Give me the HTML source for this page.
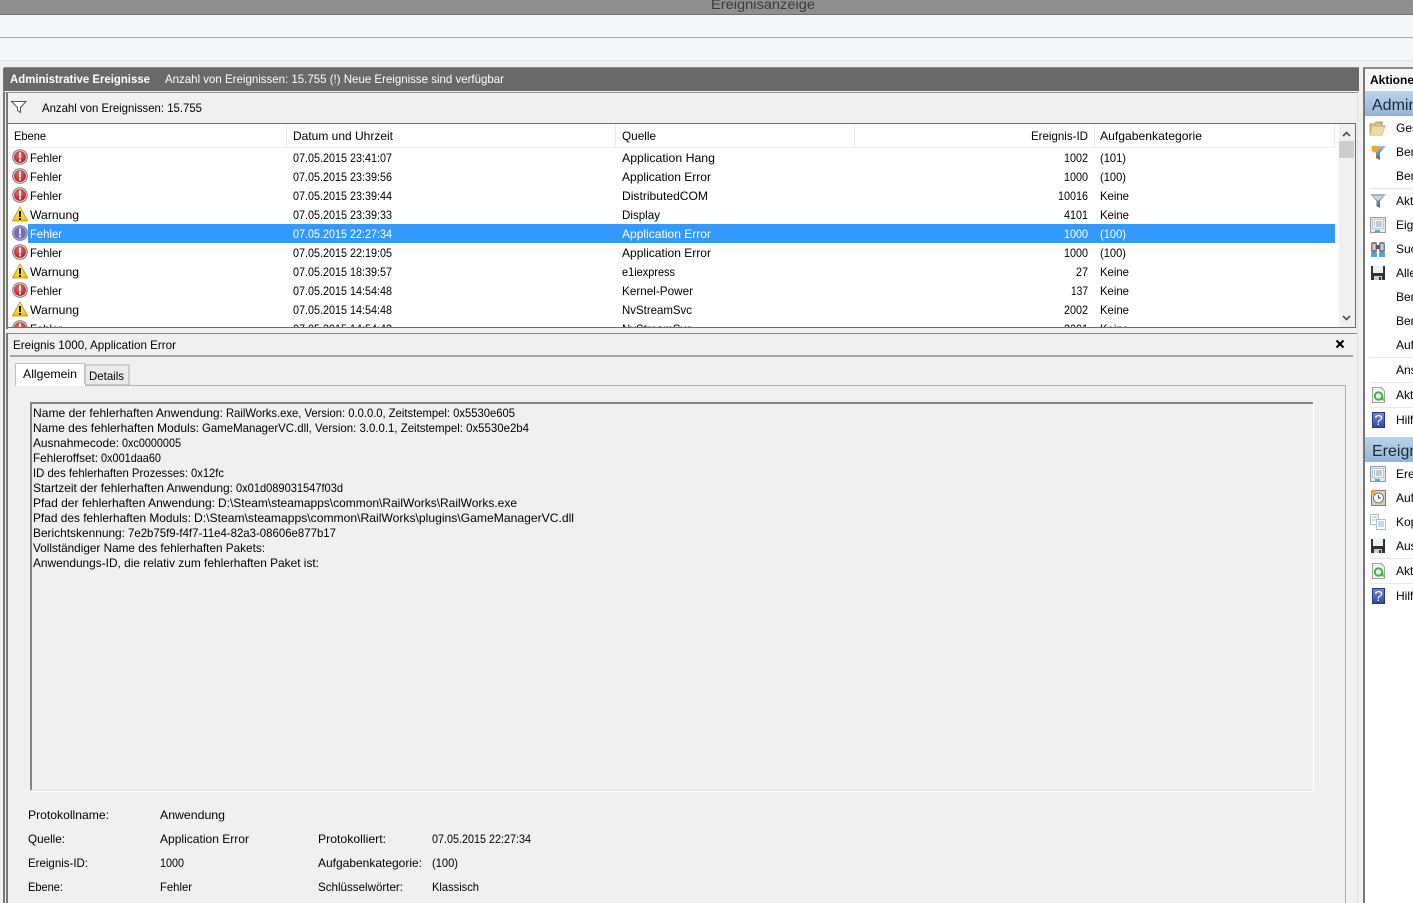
<!DOCTYPE html>
<html lang="de"><head><meta charset="utf-8"><title>Ereignisanzeige</title>
<style>
html,body{margin:0;padding:0;width:1413px;height:903px;overflow:hidden;background:#f0f0f0}
svg{display:block}
text{font-family:"Liberation Sans",sans-serif;font-size:12px;fill:#000;white-space:pre}
.w{fill:#fff}
.h{font-size:16px;fill:#1a2a3a}
</style></head><body>
<svg xmlns="http://www.w3.org/2000/svg" width="1413" height="903" viewBox="0 0 1413 903" shape-rendering="crispEdges">
<defs>
<linearGradient id="bl" x1="0" y1="0" x2="0" y2="1"><stop offset="0" stop-color="#bcd4ea"/><stop offset="1" stop-color="#94b4d6"/></linearGradient>
<radialGradient id="rd" cx=".45" cy=".35" r=".7"><stop offset="0" stop-color="#f06a6a"/><stop offset="1" stop-color="#b81414"/></radialGradient>
<linearGradient id="yl" x1="0" y1="0" x2="0" y2="1"><stop offset="0" stop-color="#fff18a"/><stop offset="1" stop-color="#f4c400"/></linearGradient>
<linearGradient id="fn" x1="0" y1="0" x2="0" y2="1"><stop offset="0" stop-color="#a9bac9"/><stop offset="1" stop-color="#4e6274"/></linearGradient>
<linearGradient id="hp" x1="0" y1="0" x2="0" y2="1"><stop offset="0" stop-color="#6f8ad8"/><stop offset="1" stop-color="#2f4aa8"/></linearGradient>
<symbol id="err" viewBox="0 0 16 16" width="16" height="16"><g shape-rendering="geometricPrecision"><circle cx="8" cy="8" r="7.900" fill="#8c8c8c"/><circle cx="8" cy="8" r="6.700" fill="#d8d8d8"/><circle cx="8" cy="8" r="5.900" fill="url(#rd)"/><rect x="7" y="3.400" width="2" height="6" fill="#fff"/><rect x="7" y="10.400" width="2" height="2" fill="#fff"/></g></symbol>
<symbol id="sel" viewBox="0 0 16 16" width="16" height="16"><g shape-rendering="geometricPrecision"><circle cx="8" cy="8" r="7.900" fill="#7f86b0"/><circle cx="8" cy="8" r="6.700" fill="#a8b4d8"/><circle cx="8" cy="8" r="5.900" fill="#7a68b0"/><rect x="7" y="3.400" width="2" height="6" fill="#dfe6f5"/><rect x="7" y="10.400" width="2" height="2" fill="#dfe6f5"/></g></symbol>
<symbol id="warn" viewBox="0 0 16 16" width="16" height="16"><g shape-rendering="geometricPrecision"><path d="M8 .8 15.600 15H.4Z" fill="url(#yl)" stroke="#b89400" stroke-width=".8"/><rect x="7" y="5" width="2" height="6" fill="#111"/><rect x="7" y="12" width="2" height="2" fill="#111"/></g></symbol>
<symbol id="fun" viewBox="0 0 16 16" width="16" height="16"><g shape-rendering="geometricPrecision"><path d="M0 1H16L10 8V15L6.500 13V8Z" fill="url(#fn)"/><path d="M3 3H13L9 7H7Z" fill="#c8d6e2"/></g></symbol>
<symbol id="doc" viewBox="0 0 16 16" width="16" height="16"><rect x=".5" y=".5" width="15" height="15" fill="#e6e8ec" stroke="#9a9a9a"/><rect x="2.500" y="2.500" width="11" height="9" fill="#f6f8fb" stroke="#c0c6ce"/><path d="M4 5H5M4 7H5M4 9H5" stroke="#39a0e0"/><path d="M6 5H12M6 7H12M6 9H12" stroke="#8c9aaa"/><rect x="5" y="13" width="5" height="2" fill="#33b4ee"/></symbol>
<symbol id="save" viewBox="0 0 16 16" width="16" height="16"><path d="M1 1H15V15H1Z" fill="#2f3338"/><rect x="3" y="1" width="10" height="7" fill="#eef0f2"/><rect x="4" y="11" width="8" height="4" fill="#c9ccd0"/><rect x="9" y="12" width="2" height="3" fill="#333"/></symbol>
<symbol id="ref" viewBox="0 0 16 16" width="16" height="16"><path d="M2.500 .5H11L14.500 4V15.500H2.500Z" fill="#f4f4f4" stroke="#a0a0a0"/><g shape-rendering="geometricPrecision"><circle cx="8.500" cy="9" r="3.700" fill="none" stroke="#3cb83c" stroke-width="2"/><path d="M9 11.500 13.500 9.500 13.500 14Z" fill="#3cb83c"/></g></symbol>
<symbol id="help" viewBox="0 0 16 16" width="16" height="16"><rect x="1.500" y=".5" width="12" height="15" fill="url(#hp)" stroke="#22387e"/><text x="7.500" y="13" text-anchor="middle" style="font-size:15px;fill:#fff">?</text></symbol>
<clipPath id="lc"><rect x="8" y="148" width="1330" height="179"/></clipPath>
</defs>

<!-- window chrome -->
<rect width="1413" height="903" fill="#f0f0f0"/>
<rect width="1413" height="14" fill="#8f8f8f"/>
<rect y="14" width="1413" height="1" fill="#6f6f6f"/>
<text x="711" y="9" textLength="104" lengthAdjust="spacingAndGlyphs" style="font-size:14px;fill:#3c3c3c">Ereignisanzeige</text>
<rect y="15" width="1413" height="45" fill="#f5f6f7"/>
<rect y="37" width="1413" height="1" fill="#a8a8a8"/>
<rect y="60" width="1413" height="1" fill="#e6e6e6"/>

<!-- left outer frame -->
<rect x="3" y="68" width="2" height="835" fill="#777"/>
<rect x="15" y="385" width="1" height="518" fill="#a8a8a8"/>
<rect x="4" y="68" width="1355" height="23" fill="#696969"/>
<rect x="4" y="67" width="1355" height="1" fill="#8a8a8a"/>
<rect x="4" y="91" width="1355" height="1" fill="#f4f4f4"/>
<rect x="5" y="92" width="1353" height="1" fill="#8f8f8f"/>
<text class="w" x="10" y="83" textLength="140" lengthAdjust="spacingAndGlyphs" style="font-weight:bold">Administrative Ereignisse</text>
<text class="w" x="165" y="83" textLength="339" lengthAdjust="spacingAndGlyphs">Anzahl von Ereignissen: 15.755 (!) Neue Ereignisse sind verfügbar</text>

<!-- filter strip -->
<rect x="5" y="93" width="1352" height="31" fill="#f0f0f0"/>
<g shape-rendering="geometricPrecision"><path d="M11.500 101.500H26L20.500 107.500V112.500L17.500 110.500V107.500Z" fill="#fff" stroke="#555"/></g>
<text x="42" y="112" textLength="160" lengthAdjust="spacingAndGlyphs">Anzahl von Ereignissen: 15.755</text>

<!-- list -->
<rect x="7" y="123" width="1349" height="205" fill="#fff"/>
<rect x="7" y="123" width="1349" height="1" fill="#6c6c6c"/>
<rect x="6" y="93" width="2" height="240" fill="#7a7a7a"/>
<rect x="1355" y="123" width="1" height="205" fill="#6c6c6c"/>
<rect x="7" y="327" width="1349" height="1" fill="#6c6c6c"/>
<rect x="8" y="147" width="1327" height="1" fill="#eaf0f9"/>
<rect x="286" y="124" width="1" height="23" fill="#e4ebf6"/>
<rect x="615" y="124" width="1" height="23" fill="#e4ebf6"/>
<rect x="854" y="124" width="1" height="23" fill="#e4ebf6"/>
<rect x="1094" y="124" width="1" height="23" fill="#e4ebf6"/>
<rect x="1334" y="124" width="1" height="23" fill="#e4ebf6"/>
<rect x="1335" y="124" width="4" height="23" fill="#fbfcfe"/>
<text x="14" y="140" textLength="32" lengthAdjust="spacingAndGlyphs">Ebene</text>
<text x="293" y="140" textLength="100" lengthAdjust="spacingAndGlyphs">Datum und Uhrzeit</text>
<text x="622" y="140" textLength="34" lengthAdjust="spacingAndGlyphs">Quelle</text>
<text x="1031" y="140" textLength="57" lengthAdjust="spacingAndGlyphs">Ereignis-ID</text>
<text x="1100" y="140" textLength="102" lengthAdjust="spacingAndGlyphs">Aufgabenkategorie</text>
<!-- scrollbar -->
<rect x="1339" y="124" width="16" height="203" fill="#f0f0f0"/>
<rect x="1339" y="141" width="15" height="17" fill="#cdcdcd"/>
<g shape-rendering="geometricPrecision" fill="none" stroke="#505050" stroke-width="1.600"><path d="M1343 136 1346.500 132.500 1350 136"/><path d="M1343 316 1346.500 319.500 1350 316"/></g>
<!-- selection -->
<rect x="28" y="224" width="1307" height="19" fill="#3399ff"/>

<g clip-path="url(#lc)">
<use href="#err" x="12" y="149"/><text x="30" y="162" textLength="32" lengthAdjust="spacingAndGlyphs">Fehler</text><text x="293" y="162" textLength="99" lengthAdjust="spacingAndGlyphs">07.05.2015 23:41:07</text><text x="622" y="162" textLength="93" lengthAdjust="spacingAndGlyphs">Application Hang</text><text x="1064" y="162" textLength="24" lengthAdjust="spacingAndGlyphs">1002</text><text x="1100" y="162" textLength="26" lengthAdjust="spacingAndGlyphs">(101)</text>
<use href="#err" x="12" y="168"/><text x="30" y="181" textLength="32" lengthAdjust="spacingAndGlyphs">Fehler</text><text x="293" y="181" textLength="99" lengthAdjust="spacingAndGlyphs">07.05.2015 23:39:56</text><text x="622" y="181" textLength="89" lengthAdjust="spacingAndGlyphs">Application Error</text><text x="1064" y="181" textLength="24" lengthAdjust="spacingAndGlyphs">1000</text><text x="1100" y="181" textLength="26" lengthAdjust="spacingAndGlyphs">(100)</text>
<use href="#err" x="12" y="187"/><text x="30" y="200" textLength="32" lengthAdjust="spacingAndGlyphs">Fehler</text><text x="293" y="200" textLength="99" lengthAdjust="spacingAndGlyphs">07.05.2015 23:39:44</text><text x="622" y="200" textLength="86" lengthAdjust="spacingAndGlyphs">DistributedCOM</text><text x="1058" y="200" textLength="30" lengthAdjust="spacingAndGlyphs">10016</text><text x="1100" y="200" textLength="29" lengthAdjust="spacingAndGlyphs">Keine</text>
<use href="#warn" x="12" y="206"/><text x="30" y="219" textLength="49" lengthAdjust="spacingAndGlyphs">Warnung</text><text x="293" y="219" textLength="99" lengthAdjust="spacingAndGlyphs">07.05.2015 23:39:33</text><text x="622" y="219" textLength="38" lengthAdjust="spacingAndGlyphs">Display</text><text x="1064" y="219" textLength="24" lengthAdjust="spacingAndGlyphs">4101</text><text x="1100" y="219" textLength="29" lengthAdjust="spacingAndGlyphs">Keine</text>
<use href="#sel" x="12" y="225"/><text class="w" x="30" y="238" textLength="32" lengthAdjust="spacingAndGlyphs">Fehler</text><text class="w" x="293" y="238" textLength="99" lengthAdjust="spacingAndGlyphs">07.05.2015 22:27:34</text><text class="w" x="622" y="238" textLength="89" lengthAdjust="spacingAndGlyphs">Application Error</text><text class="w" x="1064" y="238" textLength="24" lengthAdjust="spacingAndGlyphs">1000</text><text class="w" x="1100" y="238" textLength="26" lengthAdjust="spacingAndGlyphs">(100)</text>
<use href="#err" x="12" y="244"/><text x="30" y="257" textLength="32" lengthAdjust="spacingAndGlyphs">Fehler</text><text x="293" y="257" textLength="99" lengthAdjust="spacingAndGlyphs">07.05.2015 22:19:05</text><text x="622" y="257" textLength="89" lengthAdjust="spacingAndGlyphs">Application Error</text><text x="1064" y="257" textLength="24" lengthAdjust="spacingAndGlyphs">1000</text><text x="1100" y="257" textLength="26" lengthAdjust="spacingAndGlyphs">(100)</text>
<use href="#warn" x="12" y="263"/><text x="30" y="276" textLength="49" lengthAdjust="spacingAndGlyphs">Warnung</text><text x="293" y="276" textLength="99" lengthAdjust="spacingAndGlyphs">07.05.2015 18:39:57</text><text x="622" y="276" textLength="53" lengthAdjust="spacingAndGlyphs">e1iexpress</text><text x="1076" y="276" textLength="12" lengthAdjust="spacingAndGlyphs">27</text><text x="1100" y="276" textLength="29" lengthAdjust="spacingAndGlyphs">Keine</text>
<use href="#err" x="12" y="282"/><text x="30" y="295" textLength="32" lengthAdjust="spacingAndGlyphs">Fehler</text><text x="293" y="295" textLength="99" lengthAdjust="spacingAndGlyphs">07.05.2015 14:54:48</text><text x="622" y="295" textLength="71" lengthAdjust="spacingAndGlyphs">Kernel-Power</text><text x="1071" y="295" textLength="17" lengthAdjust="spacingAndGlyphs">137</text><text x="1100" y="295" textLength="29" lengthAdjust="spacingAndGlyphs">Keine</text>
<use href="#warn" x="12" y="301"/><text x="30" y="314" textLength="49" lengthAdjust="spacingAndGlyphs">Warnung</text><text x="293" y="314" textLength="99" lengthAdjust="spacingAndGlyphs">07.05.2015 14:54:48</text><text x="622" y="314" textLength="70" lengthAdjust="spacingAndGlyphs">NvStreamSvc</text><text x="1064" y="314" textLength="24" lengthAdjust="spacingAndGlyphs">2002</text><text x="1100" y="314" textLength="29" lengthAdjust="spacingAndGlyphs">Keine</text>
<use href="#err" x="12" y="320"/><text x="30" y="333" textLength="32" lengthAdjust="spacingAndGlyphs">Fehler</text><text x="293" y="333" textLength="99" lengthAdjust="spacingAndGlyphs">07.05.2015 14:54:43</text><text x="622" y="333" textLength="70" lengthAdjust="spacingAndGlyphs">NvStreamSvc</text><text x="1064" y="333" textLength="24" lengthAdjust="spacingAndGlyphs">2001</text><text x="1100" y="333" textLength="29" lengthAdjust="spacingAndGlyphs">Keine</text>
</g>

<!-- detail pane -->
<rect x="6" y="329" width="1351" height="574" fill="#f0f0f0"/>
<rect x="6" y="333" width="1351" height="1" fill="#8a8a8a"/>
<rect x="6" y="333" width="2" height="570" fill="#7a7a7a"/>
<rect x="1357" y="93" width="1" height="810" fill="#e2e2e2"/>
<text x="13" y="349" textLength="163" lengthAdjust="spacingAndGlyphs">Ereignis 1000, Application Error</text>
<g shape-rendering="geometricPrecision" stroke="#000" stroke-width="2"><path d="M1336.500 340.500 1343.500 347.500M1343.500 340.500 1336.500 347.500"/></g>
<rect x="10" y="355" width="1343" height="2" fill="#a6a6a6"/>

<!-- tabs -->
<rect x="15" y="385" width="1331" height="1" fill="#b4b4b4"/>
<rect x="85" y="365" width="44" height="20" fill="#eaeaea" stroke="#b0b0b0"/>
<rect x="15.500" y="363.500" width="69" height="22" fill="#fff" stroke="#c0c0c0"/>
<rect x="16" y="384" width="69" height="2" fill="#fff"/>
<text x="23" y="378" textLength="54" lengthAdjust="spacingAndGlyphs">Allgemein</text>
<text x="89" y="380" textLength="35" lengthAdjust="spacingAndGlyphs">Details</text>
<rect x="19" y="386" width="1327" height="517" fill="#f0f0f0"/>
<rect x="1345" y="385" width="1" height="518" fill="#b0b0b0"/>

<!-- message box -->
<rect x="30" y="402" width="1284" height="390" fill="#f0f0f0"/>
<rect x="30" y="402" width="1283" height="2" fill="#858585"/>
<rect x="30" y="402" width="2" height="389" fill="#858585"/>
<rect x="30" y="790" width="1284" height="1" fill="#e3e3e3"/>
<rect x="30" y="791" width="1284" height="1" fill="#fff"/>
<rect x="1313" y="402" width="1" height="390" fill="#fff"/>
<text x="33" y="417" textLength="190" lengthAdjust="spacingAndGlyphs">Name der fehlerhaften Anwendung:</text><text x="226" y="417" textLength="289" lengthAdjust="spacingAndGlyphs">RailWorks.exe, Version: 0.0.0.0, Zeitstempel: 0x5530e605</text>
<text x="33" y="432" textLength="166" lengthAdjust="spacingAndGlyphs">Name des fehlerhaften Moduls:</text><text x="202" y="432" textLength="327" lengthAdjust="spacingAndGlyphs">GameManagerVC.dll, Version: 3.0.0.1, Zeitstempel: 0x5530e2b4</text>
<text x="33" y="447" textLength="86" lengthAdjust="spacingAndGlyphs">Ausnahmecode:</text><text x="122" y="447" textLength="59" lengthAdjust="spacingAndGlyphs">0xc0000005</text>
<text x="33" y="462" textLength="65" lengthAdjust="spacingAndGlyphs">Fehleroffset:</text><text x="101" y="462" textLength="60" lengthAdjust="spacingAndGlyphs">0x001daa60</text>
<text x="33" y="477" textLength="155" lengthAdjust="spacingAndGlyphs">ID des fehlerhaften Prozesses:</text><text x="191" y="477" textLength="33" lengthAdjust="spacingAndGlyphs">0x12fc</text>
<text x="33" y="492" textLength="200" lengthAdjust="spacingAndGlyphs">Startzeit der fehlerhaften Anwendung:</text><text x="236" y="492" textLength="107" lengthAdjust="spacingAndGlyphs">0x01d089031547f03d</text>
<text x="33" y="507" textLength="182" lengthAdjust="spacingAndGlyphs">Pfad der fehlerhaften Anwendung:</text><text x="218" y="507" textLength="299" lengthAdjust="spacingAndGlyphs">D:\Steam\steamapps\common\RailWorks\RailWorks.exe</text>
<text x="33" y="522" textLength="158" lengthAdjust="spacingAndGlyphs">Pfad des fehlerhaften Moduls:</text><text x="194" y="522" textLength="380" lengthAdjust="spacingAndGlyphs">D:\Steam\steamapps\common\RailWorks\plugins\GameManagerVC.dll</text>
<text x="33" y="537" textLength="92" lengthAdjust="spacingAndGlyphs">Berichtskennung:</text><text x="128" y="537" textLength="208" lengthAdjust="spacingAndGlyphs">7e2b75f9-f4f7-11e4-82a3-08606e877b17</text>
<text x="33" y="552" textLength="232" lengthAdjust="spacingAndGlyphs">Vollständiger Name des fehlerhaften Pakets:</text>
<text x="33" y="567" textLength="286" lengthAdjust="spacingAndGlyphs">Anwendungs-ID, die relativ zum fehlerhaften Paket ist:</text>

<!-- fields -->
<text x="28" y="819" textLength="81" lengthAdjust="spacingAndGlyphs">Protokollname:</text>
<text x="160" y="819" textLength="65" lengthAdjust="spacingAndGlyphs">Anwendung</text>
<text x="28" y="843" textLength="37" lengthAdjust="spacingAndGlyphs">Quelle:</text>
<text x="160" y="843" textLength="89" lengthAdjust="spacingAndGlyphs">Application Error</text>
<text x="318" y="843" textLength="68" lengthAdjust="spacingAndGlyphs">Protokolliert:</text>
<text x="432" y="843" textLength="99" lengthAdjust="spacingAndGlyphs">07.05.2015 22:27:34</text>
<text x="28" y="867" textLength="60" lengthAdjust="spacingAndGlyphs">Ereignis-ID:</text>
<text x="160" y="867" textLength="24" lengthAdjust="spacingAndGlyphs">1000</text>
<text x="318" y="867" textLength="104" lengthAdjust="spacingAndGlyphs">Aufgabenkategorie:</text>
<text x="432" y="867" textLength="26" lengthAdjust="spacingAndGlyphs">(100)</text>
<text x="28" y="891" textLength="35" lengthAdjust="spacingAndGlyphs">Ebene:</text>
<text x="160" y="891" textLength="32" lengthAdjust="spacingAndGlyphs">Fehler</text>
<text x="318" y="891" textLength="85" lengthAdjust="spacingAndGlyphs">Schlüsselwörter:</text>
<text x="432" y="891" textLength="47" lengthAdjust="spacingAndGlyphs">Klassisch</text>

<!-- actions pane -->
<rect x="1365" y="68" width="48" height="835" fill="#fff"/>
<rect x="1363" y="68" width="2" height="835" fill="#777"/>
<rect x="1363" y="67" width="50" height="2" fill="#8a8a8a"/>
<rect x="1365" y="69" width="48" height="21" fill="#f7f7f7"/>
<text x="1370" y="84" style="font-weight:bold">Aktionen</text>
<rect x="1365" y="91" width="48" height="25" fill="url(#bl)"/>
<text class="h" x="1372" y="110">Administrative Ereignisse</text>
<rect x="1370" y="188" width="43" height="1" fill="#e4e4e4"/>
<rect x="1370" y="357" width="43" height="1" fill="#e8e8e8"/>
<rect x="1370" y="382" width="43" height="1" fill="#e8e8e8"/>
<rect x="1370" y="407" width="43" height="1" fill="#e8e8e8"/>
<rect x="1365" y="437" width="48" height="25" fill="url(#bl)"/>
<text class="h" x="1372" y="456">Ereignis 1000, Application Error</text>
<rect x="1370" y="558" width="43" height="1" fill="#e8e8e8"/>
<rect x="1370" y="583" width="43" height="1" fill="#e8e8e8"/>

<g shape-rendering="geometricPrecision"><path d="M1370 124H1375L1376 122H1382V126H1385L1382 135H1370Z" fill="#d8c08a" stroke="#a88a50" stroke-width=".8"/><path d="M1370 135 1373 127H1385L1382 135Z" fill="#eed9a6"/><rect x="1380" y="122" width="3" height="1" fill="#5bd45b"/></g>
<g shape-rendering="geometricPrecision"><path d="M1371 146H1386L1380 153V160L1376 158V153Z" fill="url(#fn)"/><circle cx="1375" cy="149" r="3.500" fill="#f5a623"/></g>
<use href="#fun" x="1370" y="193"/>
<use href="#doc" x="1370" y="217"/>
<g shape-rendering="geometricPrecision"><rect x="1371" y="242" width="6" height="11" rx="2" fill="#7a838e"/><rect x="1379" y="242" width="6" height="11" rx="2" fill="#7a838e"/><rect x="1372.500" y="244" width="3" height="6" fill="#c8ced6"/><rect x="1380.500" y="244" width="3" height="6" fill="#c8ced6"/><rect x="1376" y="245" width="4" height="4" fill="#505860"/><rect x="1371" y="253" width="6" height="4" fill="#4aa8e8"/><rect x="1379" y="253" width="6" height="4" fill="#4aa8e8"/></g>
<use href="#save" x="1370" y="265"/>
<use href="#ref" x="1370" y="387"/>
<use href="#help" x="1371" y="412"/>
<use href="#doc" x="1370" y="466"/>
<rect x="1371.500" y="490.500" width="14" height="15" fill="#d8d0c4" stroke="#8a7a68"/><g shape-rendering="geometricPrecision"><circle cx="1378.500" cy="498" r="5" fill="#fff" stroke="#777"/><path d="M1378.500 495V498H1381" fill="none" stroke="#444"/><circle cx="1373" cy="492" r="2.500" fill="#f5a623"/></g>
<rect x="1370.500" y="514.500" width="8" height="10" fill="#fff" stroke="#b4bcc6"/><rect x="1376.500" y="519.500" width="9" height="10" fill="#fff" stroke="#b4bcc6"/><path d="M1372 517H1377M1372 520H1375M1378 522H1384M1378 524H1384M1378 526H1384" stroke="#8ab4dc"/>
<use href="#save" x="1370" y="538"/>
<use href="#ref" x="1370" y="563"/>
<use href="#help" x="1371" y="588"/>

<text x="1396" y="132">Gespeicherte</text>
<text x="1396" y="156">Benutzer</text>
<text x="1396" y="180">Benutzer</text>
<text x="1396" y="205">Aktuelle</text>
<text x="1396" y="229">Eigenschaften</text>
<text x="1396" y="253">Suchen</text>
<text x="1396" y="277">Alle</text>
<text x="1396" y="301">Benutzer</text>
<text x="1396" y="325">Benutzer</text>
<text x="1396" y="349">Aufgabe</text>
<text x="1396" y="374">Ansicht</text>
<text x="1396" y="399">Aktualisieren</text>
<text x="1396" y="424">Hilfe</text>
<text x="1396" y="478">Ereignis</text>
<text x="1396" y="502">Aufgabe</text>
<text x="1396" y="526">Kopieren</text>
<text x="1396" y="550">Ausgew</text>
<text x="1396" y="575">Aktualisieren</text>
<text x="1396" y="600">Hilfe</text>
</svg>
</body></html>
